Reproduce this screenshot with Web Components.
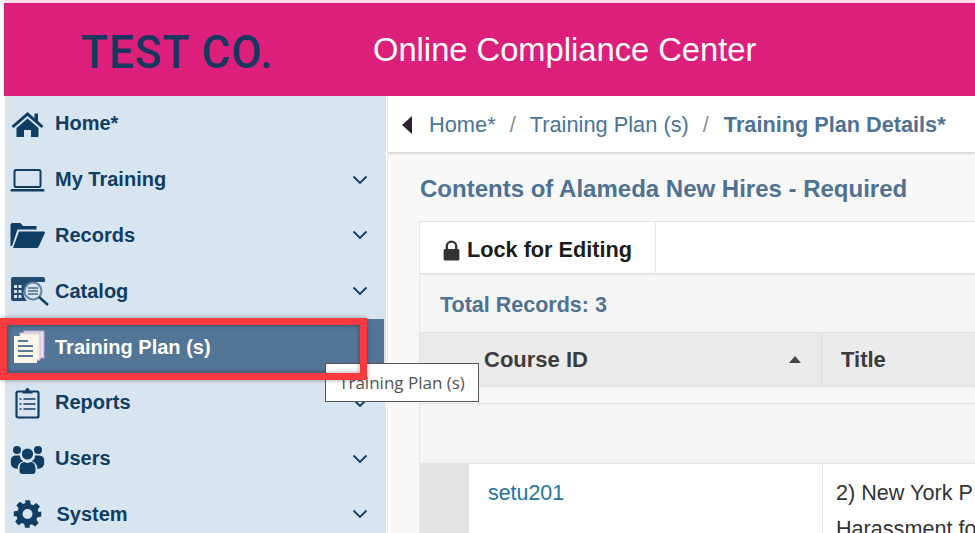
<!DOCTYPE html>
<html><head><meta charset="utf-8"><title>Online Compliance Center</title>
<style>
html,body{margin:0;padding:0;height:533px;width:975px;overflow:hidden;background:#fff;font-family:"Liberation Sans",Arial,sans-serif}
</style></head><body>
<app-shell>
  <site-header></site-header>
  <side-nav></side-nav>
  <main-pane></main-pane>
</app-shell>
<script>
const C='#0f3d63';
const icons={
home:`<svg width="34" height="26" viewBox="0 0 34 26"><path fill="${C}" d="M17 1 L24 7 V2.5 H27.5 V10 L33 15 L31 17 L17 5 L3 17 L1 15 Z"/><path fill="${C}" d="M17 7.5 L28 17 V26 H20.5 V19 H13.5 V26 H6 V17 Z"/></svg>`,
laptop:`<svg width="36" height="26" viewBox="0 0 36 26"><rect x="5" y="3" width="26" height="17" rx="1.5" fill="none" stroke="${C}" stroke-width="2"/><rect x="1" y="22" width="34" height="2.6" rx="1.2" fill="${C}"/></svg>`,
folder:`<svg width="36" height="28" viewBox="0 0 36 28"><path fill="${C}" d="M1 25 V4 Q1 2 3 2 H11 L13.5 5 H27 V8.5 H8 L2.5 25 Z"/><path fill="${C}" d="M9.5 10.5 H34.5 Q36 10.5 35.4 12 L29 26 Q28.4 27 27 27 H3.5 Z"/></svg>`,
catalog:`<svg width="38" height="30" viewBox="0 0 38 30"><path fill="#1f4a6e" d="M2 1 H32 Q34 1 34 3 V6 H22 Q14 8 12.5 16 Q12.5 22 16 25 H2 Q0 25 0 23 V3 Q0 1 2 1Z"/><g fill="#d8e4f0"><rect x="3" y="9" width="3" height="3"/><rect x="7.5" y="9" width="3" height="3"/><rect x="3" y="14" width="3" height="3"/><rect x="7.5" y="14" width="3" height="3"/><rect x="3" y="19" width="3" height="3"/><rect x="7.5" y="19" width="3" height="3"/></g><circle cx="22" cy="15" r="8.5" fill="#d8e4f0" stroke="#5b83a3" stroke-width="2"/><path d="M17 12h10M17 15h10M17 18h10" stroke="#6c8ca6" stroke-width="1.8"/><path d="M28 21 L37 29" stroke="${C}" stroke-width="2.4"/></svg>`,
plan:`<svg width="34" height="34" viewBox="0 0 34 34"><rect x="11" y="1" width="20" height="27" fill="#e8dff0" stroke="#b9a7d8"/><rect x="7" y="3" width="20" height="27" fill="#f7f2e6" stroke="#c7b9dd"/><rect x="1" y="6" width="23" height="27" fill="#fbf8ea"/><path d="M5 11h10M5 16h15M5 21h15M5 26h15" stroke="#56789a" stroke-width="2"/></svg>`,
reports:`<svg width="26" height="32" viewBox="0 0 26 32"><rect x="2" y="4.5" width="22" height="26" rx="1.5" fill="none" stroke="${C}" stroke-width="2.2"/><path fill="${C}" d="M8 6.5 V4 H10.8 Q11 1 13 1 Q15 1 15.2 4 H18 V6.5 Z"/><path d="M5 12h2M9 12h12M5 17h2M9 17h12M5 22h2M9 22h12" stroke="${C}" stroke-width="1.6"/></svg>`,
users:`<svg width="34" height="32" viewBox="0 0 34 32"><g fill="${C}"><circle cx="17" cy="11" r="5.6"/><circle cx="6.5" cy="7" r="4"/><circle cx="27.5" cy="7" r="4"/><path d="M0 19 Q0 12.5 5 12.5 L9.5 12.5 Q9.5 17 13 18 Q7 20 7 26 Q0 25 0 19Z"/><path d="M34 19 Q34 12.5 29 12.5 L24.5 12.5 Q24.5 17 21 18 Q27 20 27 26 Q34 25 34 19Z"/><path d="M9 26 Q9 19 14 19 Q17 21 20 19 Q25 19 25 26 V28 Q25 31 22 31 H12 Q9 31 9 28Z"/></g></svg>`,
gear:`<svg width="30" height="30" viewBox="0 0 24 24"><path fill="${C}" fill-rule="evenodd" d="M10 1h4l.6 3.1 1.9.8 2.6-1.8 2.8 2.8-1.8 2.6.8 1.9L23 10v4l-3.1.6-.8 1.9 1.8 2.6-2.8 2.8-2.6-1.8-1.9.8L14 23h-4l-.6-3.1-1.9-.8-2.6 1.8-2.8-2.8 1.8-2.6-.8-1.9L1 14v-4l3.1-.6.8-1.9L3.1 4.9 5.9 2.1l2.6 1.8 1.9-.8zM12 8a4 4 0 1 0 0 8 4 4 0 0 0 0-8z"/></svg>`
};
function def(name,css,html){
  customElements.define(name,class extends HTMLElement{
    constructor(){super();const r=this.attachShadow({mode:'open'});r.innerHTML=`<style>${css}</style>${typeof html==='function'?html(this):html}`;}
  });
}
def('app-shell',`:host{display:grid;grid-template-columns:386px 1fr;grid-template-rows:96px 1fr;width:975px;height:533px;position:relative;overflow:hidden}
::slotted(site-header){grid-column:1/3}`,`<slot></slot>`);
def('site-header',`:host{display:flex;align-items:center;box-sizing:border-box;margin-top:3px;margin-left:4px;height:93px;background:#dc1f7b;box-shadow:0 -3px 0 #f6dfe9}
.logo{font-family:Roboto,sans-serif;font-weight:500;font-size:47px;color:#17375e;letter-spacing:1.2px;margin-left:77px;width:292px;line-height:1;transform:scaleX(.935);transform-origin:left;white-space:nowrap;padding-top:4px}
.t{font-size:32.7px;color:#fff;white-space:nowrap}`,`<div class="logo">TEST CO.</div><div class="t">Online Compliance Center</div>`);
def('nav-item',`:host{display:flex;align-items:center;height:55.8px;box-sizing:border-box;color:${C};font-weight:700;font-size:20px;position:relative}
.i{width:50px;height:100%;display:flex;align-items:center;justify-content:center;flex:none}
:host(:not([icon=catalog]):not([icon=plan])) .i svg{transform:translateX(-2.5px)}
.l{flex:1;white-space:nowrap}
.c{width:40px;flex:none;display:flex;justify-content:center;margin-right:6px}
:host([active]){background:#537596;color:#fff;margin-right:2px}
:host([active]) .c{margin-right:4px}
:host([nochev]) .c{visibility:hidden}
:host([icon=gear]) .l{padding-left:1.5px}
`,h=>`<span class="i">${icons[h.getAttribute('icon')]}</span><span class="l"><slot></slot></span><span class="c"><svg width="16" height="10" viewBox="0 0 16 10"><path d="M1.5 1.5 L8 8 L14.5 1.5" fill="none" stroke="${C}" stroke-width="1.8"/></svg></span>`);
def('side-nav',`:host{display:flex;flex-direction:column;margin-left:5px;background:#d8e4f0;overflow:hidden;grid-column:1}`,`<div>
<nav-item icon="home" nochev>Home*</nav-item>
<nav-item icon="laptop">My Training</nav-item>
<nav-item icon="folder">Records</nav-item>
<nav-item icon="catalog">Catalog</nav-item>
<nav-item icon="plan" active nochev>Training Plan (s)</nav-item>
<nav-item icon="reports">Reports</nav-item>
<nav-item icon="users">Users</nav-item>
<nav-item icon="gear">System</nav-item>
</div>`);
def('bread-crumb',`:host{display:flex;align-items:center;height:55px;background:#fff;box-shadow:0 1px 3px rgba(0,0,0,.22);font-size:21.8px;color:#4a7596;white-space:nowrap;padding-left:14px;position:relative;box-sizing:border-box}
svg{margin-right:17px}
.s{color:#8a8f94;margin:0 14px}
b{color:#4f7292;font-size:21.7px;margin-left:1px}`,`<svg width="10" height="18" viewBox="0 0 10 18"><path d="M10 0 V18 L0 9Z" fill="#2c2233"/></svg><span>Home*</span><span class="s">/</span><span>Training Plan (s)</span><span class="s">/</span><b>Training Plan Details*</b>`);
def('plan-table',`:host{display:block;margin-left:31px;border-left:1px solid #e4e6e6;background:#f5f5f5}
.bar{display:flex;background:#fff;border-top:1px solid #e4e6e6;border-bottom:2px solid #e4e6e6;box-sizing:border-box;height:54px}
.lock{width:236px;box-sizing:border-box;border-right:1px solid #e4e6e6;display:flex;align-items:center;padding:5px 0 0 23px;font-weight:700;color:#1c1c1c;gap:7px;white-space:nowrap;font-size:21.7px}
.tot{height:57px;display:flex;align-items:center;padding:4px 0 0 20px;font-weight:700;color:#4f7292;font-size:21.5px;box-sizing:border-box}
.head{display:grid;grid-template-columns:402px 1fr;height:55px;background:#ebebeb;border-top:1px solid #e0e0e0;border-bottom:1px solid #e0e0e0;box-sizing:border-box;font-weight:700;color:#3c3c3c;font-size:22px}
.head>div{display:flex;align-items:center}
.h1{padding-left:64px;justify-content:space-between;padding-right:20px;border-right:1px solid #dcdcdc}
.h2{padding-left:19px}
.gap{height:16px;background:#f7f7f7;border-bottom:1px solid #e4e4e4;box-sizing:content-box}
.grp{height:59px;background:#f5f5f5;border-bottom:1px solid #e6e6e6}
.row{display:grid;grid-template-columns:49px 353px 1fr;height:90px;background:#fff}
.g{background:#e4e4e4}
.id{padding:17px 0 0 19px;color:#23769f;font-size:21.4px;line-height:24px}
.ti{border-left:1px solid #e4e4e4;padding:11px 0 0 13px;color:#333;white-space:nowrap;line-height:36px;font-size:21.6px}`,
`<div class="bar"><div class="lock"><svg width="17" height="21" viewBox="0 0 16 20"><path d="M3.5 9 V6 a4.5 4.5 0 0 1 9 0 V9" fill="none" stroke="#333" stroke-width="2.2"/><rect x="0.5" y="8.5" width="15" height="11" rx="1.5" fill="#333"/></svg>Lock for Editing</div></div>
<div class="tot">Total Records: 3</div>
<div class="head"><div class="h1"><span>Course ID</span><svg width="12" height="7" viewBox="0 0 12 7"><path d="M0 7 L6 0 L12 7Z" fill="#444"/></svg></div><div class="h2">Title</div></div>
<div class="gap"></div><div class="grp"></div>
<div class="row"><div class="g"></div><div class="id">setu201</div><div class="ti">2) New York P<br>Harassment fo</div></div>`);
def('main-pane',`:host{display:block;background:#f8f8f8;overflow:hidden;margin-top:1px;margin-left:1px;border-left:1px solid #ededed;position:relative}
h2{margin:0;height:69px;box-sizing:border-box;padding:24px 0 0 32px;font-size:24px;line-height:26px;color:#4f7292;font-weight:700;white-space:nowrap}`,
`<bread-crumb></bread-crumb><h2>Contents of Alameda New Hires - Required</h2><plan-table></plan-table>`);
def('call-outs',`:host{display:block}
.box{position:absolute;left:0;top:318px;width:367px;height:62px;box-sizing:border-box;border:7px solid #f93a3f;box-shadow:0 0 5px rgba(0,0,0,.35),inset 0 0 5px rgba(0,0,0,.4)}
.tip{position:absolute;left:325px;top:363px;width:154px;height:39px;box-sizing:border-box;background:#fff;border:1px solid #555;font-family:"Open Sans",sans-serif;font-size:17px;color:#555;display:flex;align-items:center;justify-content:center;white-space:nowrap}`,
`<div class="tip">Training Plan (s)</div><div class="box"></div>`);
document.querySelector('app-shell').appendChild(document.createElement('call-outs'));
</script>
</body></html>
